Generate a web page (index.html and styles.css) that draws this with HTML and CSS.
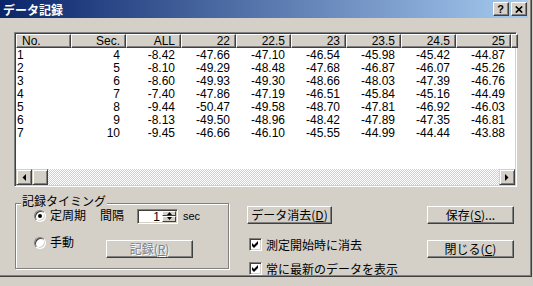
FILE: index.html
```html
<!DOCTYPE html>
<html lang="ja">
<head>
<meta charset="utf-8">
<title>データ記録</title>
<link rel="stylesheet" href="styles.css">
</head>
<body>
<div class="window">
  <div class="titlebar">
    <span class="title">データ記録</span>
    <div class="tbtns">
      <span class="tbtn q">?</span>
      <span class="tbtn"><svg width="8" height="7" viewBox="0 0 8 7"><path d="M0.8 0.5 7.2 6.5M7.2 0.5 0.8 6.5" stroke="#000" stroke-width="1.7"/></svg></span>
    </div>
  </div>
  <div class="client">
    <div class="listview">
      <div class="lv-head">
        <div class="hcell first">No.</div>
        <div class="hcell">Sec.</div>
        <div class="hcell">ALL</div>
        <div class="hcell">22</div>
        <div class="hcell">22.5</div>
        <div class="hcell">23</div>
        <div class="hcell">23.5</div>
        <div class="hcell">24.5</div>
        <div class="hcell">25</div>
        <div class="hcell fill"></div>
      </div>
      <div class="lv-rows">
        <div class="row"><span class="cell first">1</span><span class="cell">4</span><span class="cell">-8.42</span><span class="cell">-47.66</span><span class="cell">-47.10</span><span class="cell">-46.54</span><span class="cell">-45.98</span><span class="cell">-45.42</span><span class="cell">-44.87</span></div>
        <div class="row"><span class="cell first">2</span><span class="cell">5</span><span class="cell">-8.10</span><span class="cell">-49.29</span><span class="cell">-48.48</span><span class="cell">-47.68</span><span class="cell">-46.87</span><span class="cell">-46.07</span><span class="cell">-45.26</span></div>
        <div class="row"><span class="cell first">3</span><span class="cell">6</span><span class="cell">-8.60</span><span class="cell">-49.93</span><span class="cell">-49.30</span><span class="cell">-48.66</span><span class="cell">-48.03</span><span class="cell">-47.39</span><span class="cell">-46.76</span></div>
        <div class="row"><span class="cell first">4</span><span class="cell">7</span><span class="cell">-7.40</span><span class="cell">-47.86</span><span class="cell">-47.19</span><span class="cell">-46.51</span><span class="cell">-45.84</span><span class="cell">-45.16</span><span class="cell">-44.49</span></div>
        <div class="row"><span class="cell first">5</span><span class="cell">8</span><span class="cell">-9.44</span><span class="cell">-50.47</span><span class="cell">-49.58</span><span class="cell">-48.70</span><span class="cell">-47.81</span><span class="cell">-46.92</span><span class="cell">-46.03</span></div>
        <div class="row"><span class="cell first">6</span><span class="cell">9</span><span class="cell">-8.13</span><span class="cell">-49.50</span><span class="cell">-48.96</span><span class="cell">-48.42</span><span class="cell">-47.89</span><span class="cell">-47.35</span><span class="cell">-46.81</span></div>
        <div class="row"><span class="cell first">7</span><span class="cell">10</span><span class="cell">-9.45</span><span class="cell">-46.66</span><span class="cell">-46.10</span><span class="cell">-45.55</span><span class="cell">-44.99</span><span class="cell">-44.44</span><span class="cell">-43.88</span></div>
      </div>
      <div class="hscroll">
        <span class="sbtn"><svg width="4" height="7" viewBox="0 0 4 7"><polygon points="4,0 4,7 0.5,3.5" fill="#000"/></svg></span>
        <span class="sbtn thumb"></span>
        <span class="track"></span>
        <span class="sbtn"><svg width="4" height="7" viewBox="0 0 4 7"><polygon points="0,0 0,7 3.5,3.5" fill="#000"/></svg></span>
      </div>
    </div>

    <div class="bottom">
      <div class="group">
        <span class="glabel">記録タイミング</span>
        <div class="grow">
          <span class="radio-l"><span class="radio on"></span><span>定周期</span></span>
          <span class="lbl-kankaku">間隔</span>
          <span class="spin">
            <span class="spin-val">1</span>
            <span class="spin-btns">
              <span class="spin-btn"><svg width="5" height="3" viewBox="0 0 5 3"><polygon points="0,3 5,3 2.5,0" fill="#000"/></svg></span>
              <span class="spin-btn"><svg width="5" height="3" viewBox="0 0 5 3"><polygon points="0,0 5,0 2.5,3" fill="#000"/></svg></span>
            </span>
          </span>
          <span class="sec">sec</span>
        </div>
        <div class="grow2">
          <span class="radio-l wide"><span class="radio"></span><span>手動</span></span>
          <span class="btn disabled rec">記録(<u>R</u>)</span>
        </div>
      </div>

      <div class="mid">
        <span class="btn clear">データ消去(<u>D</u>)</span>
        <label class="chk first"><span class="box"><svg width="9" height="9" viewBox="0 0 9 9"><polygon points="1,3 3,5 7,1 7,4 3,8 1,6" fill="#000"/></svg></span><span>測定開始時に消去</span></label>
        <label class="chk second"><span class="box"><svg width="9" height="9" viewBox="0 0 9 9"><polygon points="1,3 3,5 7,1 7,4 3,8 1,6" fill="#000"/></svg></span><span>常に最新のデータを表示</span></label>
      </div>

      <div class="right">
        <span class="btn">保存(<u>S</u>)...</span>
        <span class="btn close">閉じる(<u>C</u>)</span>
      </div>
    </div>
  </div>
</div>
</body>
</html>
```

FILE: styles.css
```css
* { box-sizing: border-box; }

body {
  margin: 0;
  width: 533px;
  height: 286px;
  overflow: hidden;
  background: #d4d0c8;
  font-family: "Liberation Sans", "Noto Sans CJK JP", sans-serif;
  font-size: 12px;
  color: #000;
}

.window {
  width: 532px;
  height: 277px;
  border-right: 1px solid #404040;
  border-bottom: 1px solid #404040;
  box-shadow: inset -1px -1px 0 #808080;
  display: flex;
  flex-direction: column;
}

.titlebar {
  height: 18px;
  margin-right: 3px;
  padding: 0 1px 0 3px;
  background: linear-gradient(to right, #0a246a, #a6caf0);
  display: flex;
  align-items: center;
  flex: none;
}

.title {
  flex: 1;
  color: #fff;
  font-family: "Noto Sans CJK JP", sans-serif;
  font-weight: bold;
  font-size: 12px;
  line-height: 14px;
  padding-top: 1px;
}

.tbtns { display: flex; gap: 2px; }

.tbtn {
  width: 16px;
  height: 14px;
  background: #d4d0c8;
  border: 1px solid;
  border-color: #fff #404040 #404040 #fff;
  box-shadow: inset -1px -1px 0 #808080;
  display: flex;
  align-items: center;
  justify-content: center;
}

.tbtn.q {
  font-family: "Liberation Sans", sans-serif;
  font-weight: bold;
  font-size: 11px;
  line-height: 11px;
  padding-right: 1px;
}

.client {
  flex: 1;
  padding-top: 14px;
}

/* list view */
.listview {
  margin-left: 14px;
  width: 503px;
  height: 155px;
  border: 1px solid;
  border-color: #808080 #fff #fff #808080;
  padding: 1px;
  box-shadow: inset 1px 1px 0 #404040, inset -1px -1px 0 #d4d0c8;
  background: #fff;
  display: flex;
  flex-direction: column;
}

.lv-head {
  display: flex;
  height: 14px;
  flex: none;
  background: #d4d0c8;
}

.hcell {
  width: 55px;
  flex: none;
  border: 1px solid;
  border-color: #fff #404040 #404040 #fff;
  box-shadow: inset -1px -1px 0 #808080;
  background: #d4d0c8;
  text-align: right;
  padding-right: 5px;
  line-height: 12px;
  white-space: nowrap;
}

.hcell.first { text-align: left; padding-left: 5px; }
.hcell.fill { flex: 1; width: auto; }

.lv-rows { flex: 1; padding-top: 1px; }

.row {
  display: flex;
  height: 13px;
  line-height: 13px;
}

.cell {
  width: 55px;
  flex: none;
  text-align: right;
  padding-right: 6px;
  white-space: nowrap;
}

.cell.first { text-align: left; padding-left: 1px; }

.hscroll {
  height: 16px;
  flex: none;
  display: flex;
  background: repeating-conic-gradient(#fff 0 25%, #d4d0c8 0 50%) 0 0 / 2px 2px;
}

.sbtn {
  width: 16px;
  height: 16px;
  flex: none;
  background: #d4d0c8;
  border: 1px solid;
  border-color: #d4d0c8 #404040 #404040 #d4d0c8;
  box-shadow: inset 1px 1px 0 #fff, inset -1px -1px 0 #808080;
  display: flex;
  align-items: center;
  justify-content: center;
}

.track { flex: 1; }

/* bottom area */
.bottom {
  display: flex;
  align-items: flex-start;
  padding-left: 15px;
  margin-top: 16px;
}

.group {
  position: relative;
  width: 214px;
  height: 66px;
  flex: none;
  border: 1px solid #808080;
  box-shadow: inset 1px 1px 0 #fff, 1px 1px 0 #fff;
  padding: 5px 0 0 18px;
}

.glabel {
  position: absolute;
  top: -8px;
  left: 5px;
  padding: 0 1px;
  background: #d4d0c8;
  line-height: 12px;
  height: 12px;
}

.grow {
  display: flex;
  align-items: center;
  height: 14px;
}

.grow2 {
  display: flex;
  align-items: flex-start;
  margin-top: 14px;
}

.radio-l {
  width: 66px;
  height: 12px;
  flex: none;
  display: flex;
  align-items: center;
  gap: 4px;
  line-height: 12px;
}

.radio-l.wide { width: 72px; }

.radio {
  position: relative;
  width: 12px;
  height: 12px;
  flex: none;
  border-radius: 50%;
  background: #fff;
  border: 1px solid;
  border-color: #808080 #fff #fff #808080;
  box-shadow: inset 1px 1px 0 #404040, inset -1px -1px 0 #d4d0c8;
}

.radio.on::after {
  content: "";
  position: absolute;
  left: 3px;
  top: 3px;
  width: 4px;
  height: 4px;
  border-radius: 50%;
  background: #000;
}

.lbl-kankaku {
  width: 37px;
  flex: none;
  line-height: 12px;
}

.spin {
  width: 41px;
  height: 15px;
  flex: none;
  display: flex;
  background: #fff;
  border: 1px solid;
  border-color: #808080 #fff #fff #808080;
  box-shadow: inset 1px 1px 0 #404040, inset -1px -1px 0 #d4d0c8;
  padding: 1px;
  font-family: "Liberation Sans", sans-serif;
}

.spin-val {
  flex: 1;
  text-align: right;
  padding-right: 2px;
  line-height: 12px;
}

.spin-btns {
  width: 14px;
  display: flex;
  flex-direction: column;
}

.spin-btn {
  flex: 1;
  background: #d4d0c8;
  border: 1px solid;
  border-color: #fff #404040 #404040 #fff;
  display: flex;
  align-items: center;
  justify-content: center;
}

.sec {
  margin-left: 5px;
  font-family: "Liberation Sans", sans-serif;
  font-size: 11px;
  line-height: 12px;
}

/* buttons */
.btn {
  display: flex;
  align-items: center;
  justify-content: center;
  width: 87px;
  height: 18px;
  flex: none;
  background: #d4d0c8;
  border: 1px solid;
  border-color: #fff #404040 #404040 #fff;
  box-shadow: inset -1px -1px 0 #808080;
  font-family: "Noto Sans CJK JP", sans-serif;
  font-size: 12px;
  line-height: 14px;
  white-space: nowrap;
}

.btn u { text-decoration: underline; text-underline-offset: 1px; }

.btn.rec { margin-top: 3px; }

.btn.disabled {
  color: #808080;
  text-shadow: 1px 1px 0 #fff;
}

.btn.clear { width: 85px; }

.mid {
  width: 180px;
  flex: none;
  margin-left: 18px;
  margin-top: 3px;
  display: flex;
  flex-direction: column;
  align-items: flex-start;
}

.chk {
  display: flex;
  align-items: center;
  gap: 4px;
  height: 13px;
  margin-left: 2px;
  font-family: "Noto Sans CJK JP", sans-serif;
  line-height: 13px;
  white-space: nowrap;
}

.chk.first { margin-top: 14px; }
.chk.second { margin-top: 11px; }

.box {
  width: 13px;
  height: 13px;
  flex: none;
  background: #fff;
  border: 1px solid;
  border-color: #808080 #fff #fff #808080;
  box-shadow: inset 1px 1px 0 #404040, inset -1px -1px 0 #d4d0c8;
  display: flex;
  align-items: center;
  justify-content: center;
}

.right {
  width: 87px;
  flex: none;
  margin-top: 3px;
  display: flex;
  flex-direction: column;
  gap: 16px;
}
```
